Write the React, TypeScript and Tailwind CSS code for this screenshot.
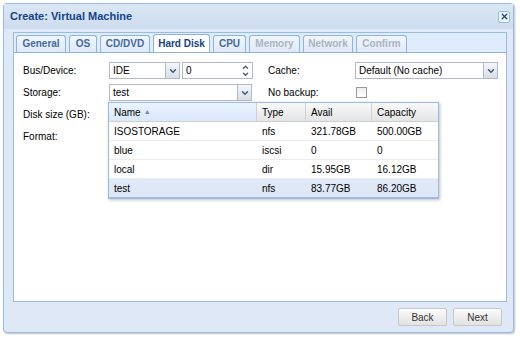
import { ChevronDown, ChevronUp, X } from "lucide-react";

const tabs = [
  { label: "General", w: "w-[50px]" },
  { label: "OS", w: "w-[28px]" },
  { label: "CD/DVD", w: "w-[50px]" },
  { label: "Hard Disk", w: "w-[57px]", active: true },
  { label: "CPU", w: "w-[33px]" },
  { label: "Memory", w: "w-[51px]", disabled: true },
  { label: "Network", w: "w-[50px]", disabled: true },
  { label: "Confirm", w: "w-[51px]", disabled: true },
];

const storages = [
  { name: "ISOSTORAGE", type: "nfs", avail: "321.78GB", capacity: "500.00GB" },
  { name: "blue", type: "iscsi", avail: "0", capacity: "0" },
  { name: "local", type: "dir", avail: "15.95GB", capacity: "16.12GB" },
  { name: "test", type: "nfs", avail: "83.77GB", capacity: "86.20GB", selected: true },
];

function Trigger() {
  return (
    <div className="w-[14px] h-full shrink-0 flex items-center justify-center border-l border-[#b5b8c8] bg-gradient-to-b from-[#f4f6f9] to-[#d9dee6] text-[#3b5a82]">
      <ChevronDown size={10} strokeWidth={3.5} />
    </div>
  );
}

function Combo({ value, width }: { value: string; width: string }) {
  return (
    <div className={`${width} h-[17px] flex border border-[#b5b8c8] bg-white`}>
      <div className="flex-1 px-[3px] leading-[15px] text-black">{value}</div>
      <Trigger />
    </div>
  );
}

function TabButton({ label, w, active, disabled }: { label: string; w: string; active?: boolean; disabled?: boolean }) {
  return (
    <div
      className={
        w +
        " shrink-0 text-center mr-[3px] rounded-t-[3px] border border-b-0 border-[#8db2e3] font-bold " +
        (active
          ? "bg-white text-[#15428b] h-[18px] leading-[17px]"
          : disabled
          ? "h-[17px] leading-[16px] bg-gradient-to-b from-[#f1f6fd] to-[#dfe9f6] text-[#aab3bf]"
          : "h-[17px] leading-[16px] bg-gradient-to-b from-[#f1f6fd] to-[#dfe9f6] text-[#416aa3]")
      }
    >
      {label}
    </div>
  );
}

export default function App() {
  return (
    <div
      className="w-[520px] h-[338px] bg-white pt-[3px] pl-[3px] text-[10px]"
      style={{ fontFamily: "Tahoma, 'Liberation Sans', Arial, sans-serif" }}
    >
      <div className="w-[511px] h-[330px] border border-[#99bbe8] rounded-[4px] bg-[#dfe8f6] shadow-[1px_1px_2px_rgba(0,0,0,0.25)] flex flex-col">
        <div className="h-[25px] flex items-center justify-between pl-[6px] pr-[3px] bg-gradient-to-b from-[#dae6f4] to-[#cddcef]">
          <span className="font-bold text-[#15428b] text-[11px]">Create: Virtual Machine</span>
          <div className="w-[12px] h-[12px] border border-[#99bbe8] rounded-[2px] bg-[#f0f5fc] flex items-center justify-center text-[#15428b]">
            <X size={9} strokeWidth={3.5} />
          </div>
        </div>

        <div className="flex-1 flex flex-col pl-[9px] pr-[6px] pt-[3px]">
          <div className="flex-1 flex flex-col border border-[#99bbe8]">
            <div className="h-[20px] bg-[#deecfd] flex items-end pl-[2px] border-b border-[#8db2e3]">
              {tabs.map((t) => (
                <TabButton key={t.label} {...t} />
              ))}
            </div>

            <div className="relative flex-1 bg-white pt-[9px] pl-[9px] text-black">
              <div className="flex gap-[17px]">
                <div className="flex flex-col gap-[5px]">
                  <div className="flex items-center h-[17px]">
                    <span className="w-[86px]">Bus/Device:</span>
                    <Combo value="IDE" width="w-[71px]" />
                    <div className="ml-[2px] w-[71px] h-[17px] flex border border-[#b5b8c8] bg-white">
                      <div className="flex-1 px-[3px] leading-[15px]">0</div>
                      <div className="w-[13px] h-full flex flex-col items-center justify-center text-[#3b5a82] bg-white">
                        <ChevronUp size={9} strokeWidth={3.5} className="-mb-[1px]" />
                        <ChevronDown size={9} strokeWidth={3.5} className="-mt-[1px]" />
                      </div>
                    </div>
                  </div>
                  <div className="flex items-center h-[17px]">
                    <span className="w-[86px]">Storage:</span>
                    <Combo value="test" width="w-[143px]" />
                  </div>
                  <div className="flex items-center h-[17px]">
                    <span className="w-[86px]">Disk size (GB):</span>
                  </div>
                  <div className="flex items-center h-[17px]">
                    <span className="w-[86px]">Format:</span>
                  </div>
                </div>

                <div className="flex flex-col gap-[5px]">
                  <div className="flex items-center h-[17px]">
                    <span className="w-[87px] -ml-[2px]">Cache:</span>
                    <Combo value="Default (No cache)" width="w-[143px]" />
                  </div>
                  <div className="flex items-center h-[17px]">
                    <span className="w-[88px] -ml-[2px]">No backup:</span>
                    <div className="w-[11px] h-[11px] border border-[#9a9a9a] bg-gradient-to-b from-[#eeeeee] to-[#ffffff]" />
                  </div>
                </div>
              </div>

              <div className="absolute left-[94px] top-[49px] w-[331px] border border-[#99bbe8] bg-white shadow-[1px_1px_3px_rgba(0,0,0,0.25)]">
                <div className="flex h-[19px] border-b border-[#d0d0d0] bg-gradient-to-b from-[#f9f9f9] to-[#e3e4e6]">
                  <div className="w-[148px] shrink-0 pl-[5px] flex items-center gap-[3px] bg-gradient-to-b from-[#ebf3fd] to-[#d9e8fb] border-r border-[#d0d0d0]">
                    Name <span className="text-[7px] text-[#6e8ab3]">▲</span>
                  </div>
                  <div className="w-[49px] shrink-0 pl-[5px] flex items-center border-r border-[#d0d0d0]">Type</div>
                  <div className="w-[66px] shrink-0 pl-[5px] flex items-center border-r border-[#d0d0d0]">Avail</div>
                  <div className="flex-1 pl-[5px] flex items-center">Capacity</div>
                </div>
                {storages.map((s) => (
                  <div
                    key={s.name}
                    className={
                      "flex h-[19px] items-center border-b " +
                      (s.selected ? "bg-[#dfe8f6] border-[#a3bae9]" : "border-[#ededed]")
                    }
                  >
                    <div className="w-[148px] shrink-0 pl-[5px]">{s.name}</div>
                    <div className="w-[49px] shrink-0 pl-[5px]">{s.type}</div>
                    <div className="w-[66px] shrink-0 pl-[5px]">{s.avail}</div>
                    <div className="flex-1 pl-[5px]">{s.capacity}</div>
                  </div>
                ))}
              </div>
            </div>
          </div>

          <div className="h-[30px] flex items-center justify-end gap-[6px] pr-[5px]">
            {["Back", "Next"].map((b) => (
              <div
                key={b}
                className="w-[49px] h-[18px] flex items-center justify-center rounded-[2px] border border-[#c8c8c8] bg-gradient-to-b from-[#fbfbfb] to-[#e2e2e2] text-[#333]"
              >
                {b}
              </div>
            ))}
          </div>
        </div>
      </div>
    </div>
  );
}
